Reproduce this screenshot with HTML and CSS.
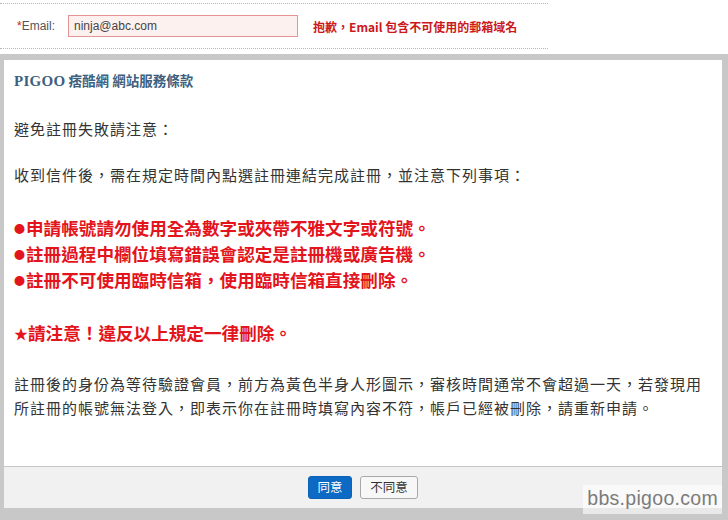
FILE: index.html
```html
<!DOCTYPE html>
<html lang="zh-Hant">
<head>
<meta charset="utf-8">
<title>PIGOO 痞酷網 網站服務條款</title>
<link rel="stylesheet" href="styles.css">
</head>
<body>
<div class="page-top">
  <div class="form-row">
    <label class="label"><span class="req">*</span>Email:</label>
    <div class="input">ninja@abc.com</div>
    <span class="error">抱歉，Email 包含不可使用的郵箱域名</span>
  </div>
</div>
<div class="overlay">
  <div class="modal">
    <div class="modal-body">
      <h1 class="title"><span class="latin">PIGOO</span> 痞酷網 網站服務條款</h1>
      <p class="txt p1">避免註冊失敗請注意：</p>
      <p class="txt p2">收到信件後，需在規定時間內點選註冊連結完成註冊，並注意下列事項：</p>
      <ul class="rules">
        <li><span class="dot">●</span>申請帳號請勿使用全為數字或夾帶不雅文字或符號。</li>
        <li><span class="dot">●</span>註冊過程中欄位填寫錯誤會認定是註冊機或廣告機。</li>
        <li><span class="dot">●</span>註冊不可使用臨時信箱，使用臨時信箱直接刪除。</li>
      </ul>
      <p class="warn"><span class="star">★</span>請注意！違反以上規定一律刪除。</p>
      <p class="txt p3">註冊後的身份為等待驗證會員，前方為黃色半身人形圖示，審核時間通常不會超過一天，若發現用所註冊的帳號無法登入，即表示你在註冊時填寫內容不符，帳戶已經被刪除，請重新申請。</p>
    </div>
    <div class="modal-foot">
      <button class="btn btn-primary">同意</button>
      <button class="btn btn-default">不同意</button>
    </div>
  </div>
  <div class="watermark">bbs.pigoo.com</div>
</div>
</body>
</html>
```
FILE: styles.css
```css
html, body {
  margin: 0;
  padding: 0;
  background: #ffffff;
  font-family: "Noto Sans CJK TC", "Noto Sans", sans-serif;
}
.page-top {
  height: 54px;
  background: #ffffff;
  padding-top: 3px;
  box-sizing: border-box;
}
.form-row {
  width: 548px;
  height: 46px;
  box-sizing: border-box;
  border-top: 1px dotted #b8b8b8;
  border-bottom: 1px dotted #b8b8b8;
  display: flex;
  align-items: center;
  padding-left: 17px;
}
.label {
  font-family: "Liberation Sans", "Noto Sans", sans-serif;
  font-size: 12px;
  color: #555555;
  width: 51px;
}
.req {
  color: #cc2020;
}
.input {
  width: 230px;
  height: 22px;
  box-sizing: border-box;
  border: 1px solid #e39494;
  background: #fdf1f0;
  font-family: "Liberation Sans", "Noto Sans", sans-serif;
  font-size: 12px;
  color: #444444;
  line-height: 20px;
  padding-left: 5px;
}
.error {
  margin-left: 15px;
  font-size: 12px;
  font-weight: bold;
  color: #cc1a1a;
}
.overlay {
  position: relative;
  background: #c8c8c8;
  padding: 6px 4px 12px 4px;
  height: 466px;
  box-sizing: border-box;
}
.modal {
  width: 718px;
  background: #ffffff;
}
.modal-body {
  height: 406px;
  box-sizing: border-box;
  padding: 10px 10px 0 10px;
  color: #333333;
}
.title {
  margin: 0;
  font-size: 13.5px;
  line-height: 20px;
  font-weight: bold;
  color: #3d5f80;
}
.latin {
  font-family: "Liberation Serif", serif;
  font-size: 15px;
  letter-spacing: 0.3px;
}
.txt {
  margin: 0;
  font-size: 15px;
  letter-spacing: 1px;
  line-height: 24px;
}
.p1 {
  margin-top: 26px;
}
.p2 {
  margin-top: 22px;
}
.rules {
  list-style: none;
  margin: 28px 0 0 0;
  padding: 0;
}
.rules li, .warn {
  font-size: 17.6px;
  font-weight: bold;
  line-height: 26px;
  color: #e3141b;
}
.dot {
  font-size: 11px;
  display: inline-block;
  width: 12px;
  vertical-align: 2px;
}
.star {
  font-size: 14px;
  display: inline-block;
  width: 14px;
  vertical-align: 1px;
}
.warn {
  margin: 27px 0 0 0;
}
.p3 {
  margin-top: 26px;
}
.modal-foot {
  height: 42px;
  box-sizing: border-box;
  border-top: 1px solid #c6c6c6;
  background: #f1f1f1;
  display: flex;
  justify-content: center;
  align-items: center;
  gap: 8px;
  padding-bottom: 1px;
}
.btn {
  height: 23px;
  font-family: "Noto Sans CJK TC", sans-serif;
  font-size: 12.5px;
  line-height: 20px;
  border-radius: 3px;
  padding: 0;
  box-sizing: border-box;
  white-space: nowrap;
}
.btn-primary {
  width: 44px;
  background: #0c69c4;
  border: 1px solid #0c62b8;
  color: #ffffff;
}
.btn-default {
  width: 58px;
  background: #f7f7f7;
  border: 1px solid #a8a8a8;
  color: #333333;
}
.watermark {
  position: absolute;
  right: 6px;
  bottom: 6px;
  padding: 2px 4px 4px 4px;
  background: rgba(255, 255, 255, 0.6);
  font-family: "Liberation Sans", Arial, sans-serif;
  font-size: 19.5px;
  letter-spacing: 0.3px;
  color: #7c7c7c;
}
```
